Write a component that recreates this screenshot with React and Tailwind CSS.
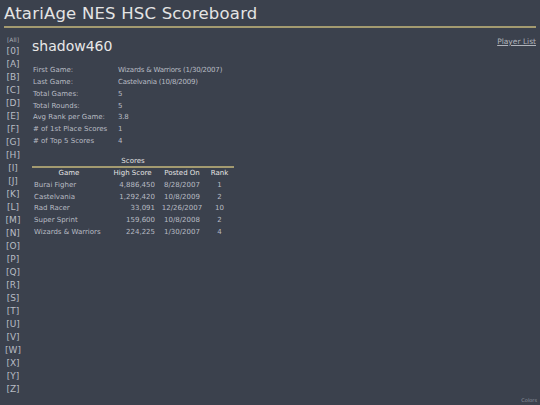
import React from "react";

const letters = ["0","A","B","C","D","E","F","G","H","I","J","K","L","M","N","O","P","Q","R","S","T","U","V","W","X","Y","Z"];

const info = [
  ["First Game:", "Wizards & Warriors (1/30/2007)"],
  ["Last Game:", "Castelvania (10/8/2009)"],
  ["Total Games:", "5"],
  ["Total Rounds:", "5"],
  ["Avg Rank per Game:", "3.8"],
  ["# of 1st Place Scores", "1"],
  ["# of Top 5 Scores", "4"],
];

const scores = [
  ["Burai Figher", "4,886,450", "8/28/2007", "1"],
  ["Castelvania", "1,292,420", "10/8/2009", "2"],
  ["Rad Racer", "33,091", "12/26/2007", "10"],
  ["Super Sprint", "159,600", "10/8/2008", "2"],
  ["Wizards & Warriors", "224,225", "1/30/2007", "4"],
];

export default function App() {
  return (
    <div className="w-[540px] h-[405px] bg-[#3b414d] text-[#c4c7cd] overflow-hidden relative" style={{ fontFamily: '"DejaVu Sans", sans-serif' }}>
      <div className="px-[4px] pt-[3px]">
        <div className="text-[16.5px] leading-[22px] text-[#e4e4e4] tracking-[0.2px]">AtariAge NES HSC Scoreboard</div>
        <div className="h-[2px] bg-[#a39a70] mt-[1px]"></div>
      </div>
      <div className="flex">
        <div className="w-[26px] flex flex-col items-center pt-[7px]">
          <div className="text-[6px] leading-[10px] text-[#a8acb4]">[All]</div>
          {letters.map((l) => (
            <div key={l} className="text-[9px] leading-[13px] text-[#b8bcc4]">[{l}]</div>
          ))}
        </div>
        <div className="flex-1 pl-[6px] pr-[4px] pt-[9px]">
          <div className="flex justify-between items-start">
            <div className="text-[14px] leading-[18px] text-[#e8e8e8]">shadow460</div>
            <a className="text-[7.5px] leading-[10px] underline text-[#b0b4bc]">Player List</a>
          </div>
          <div className="mt-[10px] pl-[1px]">
            {info.map(([k, v]) => (
              <div key={k} className="flex text-[7px] leading-[11.85px] text-[#b8bcc4]">
                <div className="w-[85px]">{k}</div>
                <div className="tracking-[-0.2px]">{v}</div>
              </div>
            ))}
          </div>
          <div className="mt-[8px] w-[202px]">
            <div className="text-center text-[7px] leading-[10px] text-[#e0e0e0]">Scores</div>
            <div className="h-[2px] bg-[#a39a70]"></div>
            <table className="w-[202px] text-[7px] border-collapse table-fixed">
              <thead>
                <tr className="text-[#e4e4e4] leading-[11.8px]">
                  <th className="font-normal text-center w-[74px]">Game</th>
                  <th className="font-normal text-center w-[53px]">High Score</th>
                  <th className="font-normal text-center w-[46px]">Posted On</th>
                  <th className="font-normal text-center w-[29px]">Rank</th>
                </tr>
              </thead>
              <tbody>
                {scores.map((r) => (
                  <tr key={r[0]} className="text-[#b8bcc4] leading-[11.8px]">
                    <td className="pl-[2px] whitespace-nowrap">{r[0]}</td>
                    <td className="text-right pr-[4px]">{r[1]}</td>
                    <td className="text-center whitespace-nowrap">{r[2]}</td>
                    <td className="text-center">{r[3]}</td>
                  </tr>
                ))}
              </tbody>
            </table>
          </div>
        </div>
      </div>
      <div className="absolute right-[3px] bottom-[1px] text-[5px] text-[#9096a0]">Colors</div>
    </div>
  );
}
